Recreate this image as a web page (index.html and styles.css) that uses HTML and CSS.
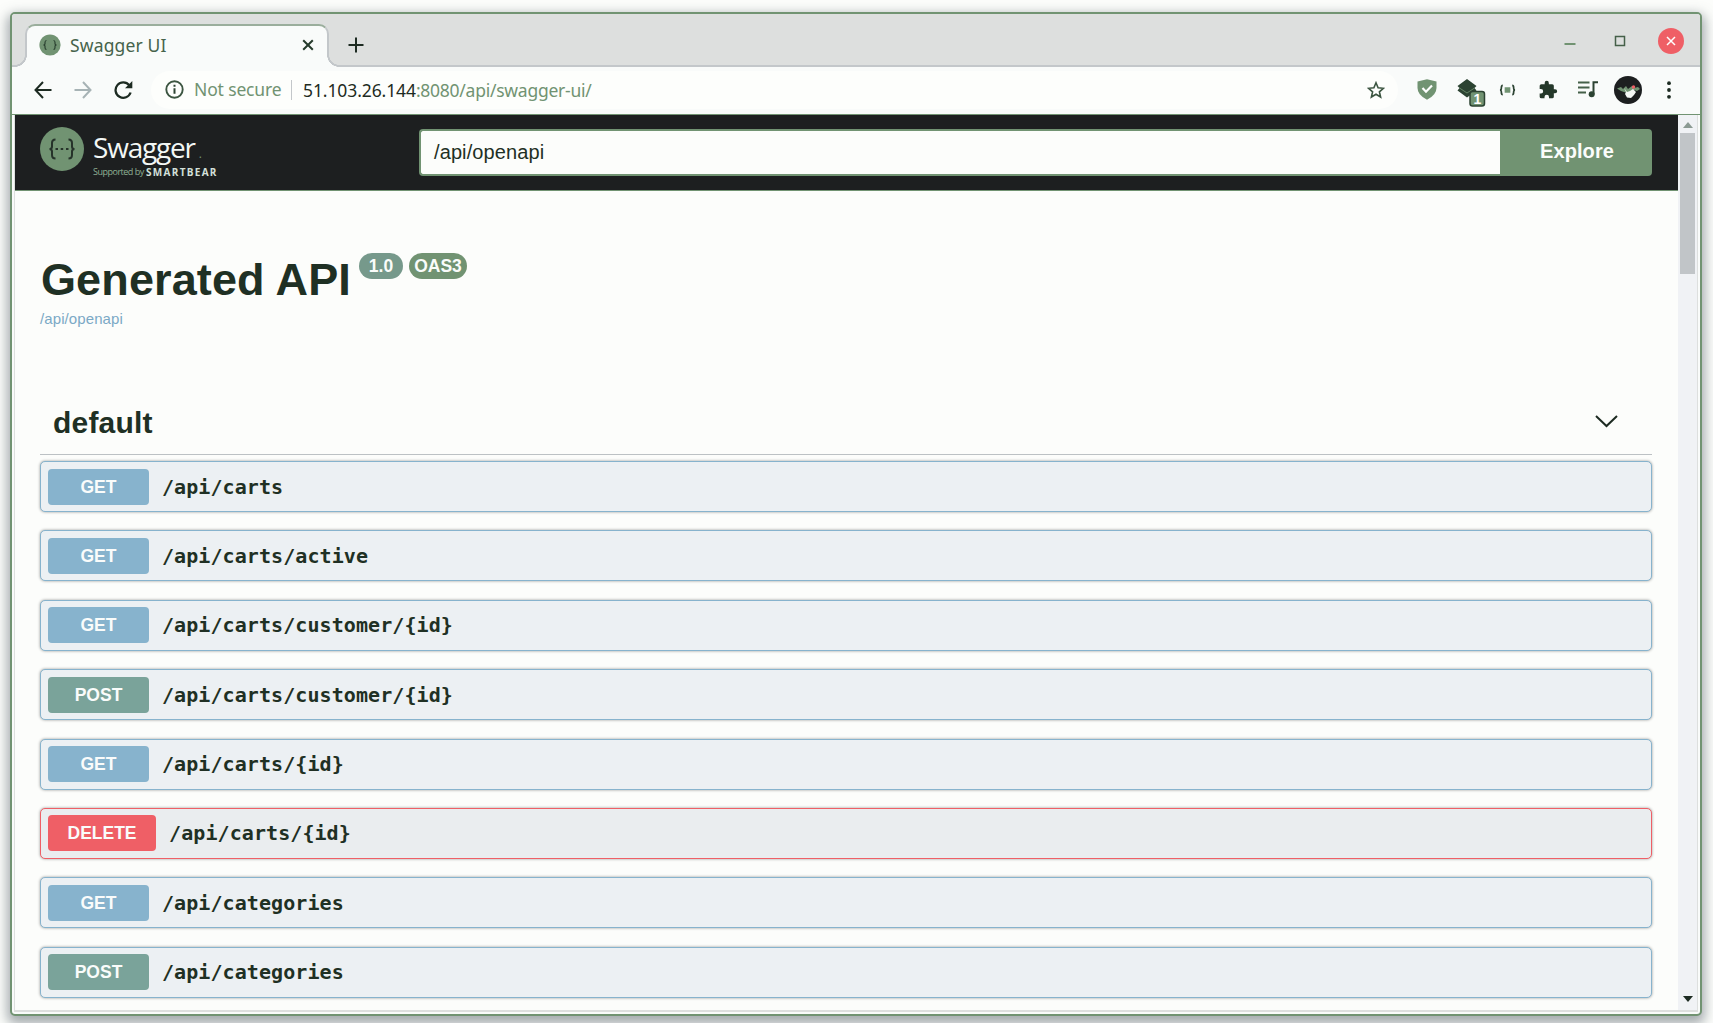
FILE: index.html
```html
<!DOCTYPE html>
<html lang="en">
<head>
<meta charset="utf-8">
<title>Swagger UI</title>
<link rel="stylesheet" href="styles.css">
</head>
<body>
<div class="window">
  <div class="tabstrip">
    <div class="tab">
      <svg class="favicon" width="22" height="22" viewBox="0 0 22 22"><circle cx="11" cy="11" r="10.6" fill="#719372"/><path d="M7.5 6.5q-1.500 0-1.500 2v1.500l-1 1 1 1v1.500q0 2 1.500 2M14.500 6.500q1.500 0 1.500 2v1.500l1 1-1 1v1.500q0 2-1.500 2" fill="none" stroke="#2c4332" stroke-width="1.200"/></svg>
      <span class="tab-title">Swagger UI</span>
      <svg class="tab-close" width="12" height="12" viewBox="0 0 12 12"><path d="M1.200 1.200l9.600 9.600M10.800 1.200l-9.600 9.600" stroke="#263b2c" stroke-width="2"/></svg>
    </div>
    <svg class="new-tab" width="16" height="16" viewBox="0 0 16 16"><path d="M8 .5v15M.5 8h15" stroke="#1d2b22" stroke-width="2"/></svg>
    <div class="controls">
      <svg width="12" height="12" viewBox="0 0 12 12"><path d="M.5 9h11" stroke="#719372" stroke-width="2"/></svg>
      <svg width="12" height="12" viewBox="0 0 12 12"><rect x="1.500" y="1.500" width="9" height="9" fill="none" stroke="#456049" stroke-width="1.500"/></svg>
      <svg width="26" height="26" viewBox="0 0 26 26"><circle cx="13" cy="13" r="13" fill="#ef5f66"/><path d="M9 9l8 8M17 9l-8 8" stroke="#fff" stroke-width="1.500"/></svg>
    </div>
  </div>

  <div class="toolbar">
    <div class="nav">
      <svg width="18" height="18" viewBox="0 0 18 18"><path d="M9 1L1.500 9L9 17M1.500 9H17.500" fill="none" stroke="#1d2b22" stroke-width="2"/></svg>
      <svg width="18" height="18" viewBox="0 0 18 18"><path d="M9 1l7.500 8L9 17M16.500 9H.5" fill="none" stroke="#a7b3b5" stroke-width="2"/></svg>
      <svg width="19" height="18" viewBox="0 0 19 18"><path d="M15.300 4.300A7.700 7.700 0 1 0 16.600 11.500" fill="none" stroke="#1d2b22" stroke-width="2.300"/><path d="M18.300 0v7.300H11z" fill="#1d2b22"/></svg>
    </div>
    <div class="address">
      <svg class="info" width="19" height="19" viewBox="0 0 19 19"><circle cx="9.500" cy="9.500" r="8.200" fill="none" stroke="#3c5541" stroke-width="1.900"/><path d="M9.500 8.200v5.600M9.500 4.800v2" stroke="#2c4332" stroke-width="2"/></svg>
      <span class="insecure">Not secure</span>
      <span class="url"><b>51.103.26.144</b>:8080/api/swagger-ui/</span>
      <svg class="star" width="18" height="18" viewBox="0 0 18 18"><path d="M9 1.800l2.100 5 5.300.5-4 3.500 1.200 5.200L9 13.200 4.400 16l1.200-5.200-4-3.500 5.300-.5z" fill="none" stroke="#3c5541" stroke-width="1.600"/></svg>
    </div>
    <div class="extensions">
      <svg class="shield" width="20" height="21" viewBox="0 0 20 21"><path d="M10 .3l9.500 2.200v6.500q0 7-9.500 11.700Q.5 16 .5 9V2.500z" fill="#719372"/><path d="M5.500 9l3.500 3.700 6-6.200" fill="none" stroke="#fff" stroke-width="2.200"/></svg>
      <svg class="layers" width="29" height="29" viewBox="0 0 29 29"><path d="M10 1l9.500 7-2 2 2 2.500L10 19.500.5 12.500l2-2.500-2-2z" fill="#2c4332"/><path d="M2.500 10l7.500 5 7.500-5" fill="none" stroke="#719372" stroke-width=".8"/><rect x="13" y="13.500" width="14.500" height="14.500" rx="2.500" fill="#719372" stroke="#2c4332" stroke-width="1.500"/><text x="20.300" y="26" text-anchor="middle" class="badge-count">1</text></svg>
      <svg class="braces" width="17" height="12" viewBox="0 0 18 12"><path d="M4 1Q2.500 1 2.500 3.500T1 6q1.500 0 1.500 2.500T4 11M14 1q1.500 0 1.500 2.500T17 6q-1.500 0-1.500 2.500T14 11" fill="none" stroke="#2c4332" stroke-width="1.800"/><path d="M6 3h6v6H6z" fill="#719372"/></svg>
      <svg class="puzzle" width="20" height="20" viewBox="0 0 24 24"><path d="M20.500 11H19V7a2 2 0 0 0-2-2h-4V3.500a2.500 2.500 0 0 0-5 0V5H4a2 2 0 0 0-2 2v3.800h1.500a2.700 2.700 0 0 1 0 5.400H2V20a2 2 0 0 0 2 2h3.800v-1.500a2.700 2.700 0 0 1 5.400 0V22H17a2 2 0 0 0 2-2v-4h1.500a2.500 2.500 0 0 0 0-5z" fill="#25382a"/></svg>
      <svg class="queue" width="20" height="17" viewBox="0 0 20 17"><path d="M0 1.500h11.500M0 6.500h11.500M0 11.500h8" stroke="#456049" stroke-width="2"/><path d="M15.500 13V1.200H20" fill="none" stroke="#2c4332" stroke-width="2"/><circle cx="13.700" cy="13.300" r="3" fill="#2c4332"/></svg>
      <svg class="avatar" width="28" height="28" viewBox="0 0 28 28"><circle cx="14" cy="14" r="14" fill="#1d1f20"/><path d="M3 12.500l4-1.500 2 2 3-3 2 3 4-3 2 2 4-1 2 2-3 2-3-1-3 2-4 1-6-2z" fill="#719372"/><path d="M10 12l3 4 3-1 3-2 3 3-2 3-3 3-4-.5-2-3.500 1-2z" fill="#f5f7f5"/><circle cx="19.500" cy="11" r="1.700" fill="#ef5f66"/></svg>
      <svg width="4" height="18" viewBox="0 0 4 18" fill="#1d2b22"><circle cx="2" cy="2.200" r="1.900"/><circle cx="2" cy="9" r="1.900"/><circle cx="2" cy="15.800" r="1.900"/></svg>
    </div>
  </div>

  <div class="viewport">
    <div class="page">
      <header class="topbar">
        <div class="logo">
          <svg width="44" height="44" viewBox="0 0 44 44"><circle cx="22" cy="22" r="22" fill="#719372"/><path d="M15.500 12.500q-3.500 0-3.500 3.500v3.500q0 2.500-2.500 2.500 2.500 0 2.500 2.500V28q0 3.500 3.500 3.500M28.500 12.500q3.500 0 3.500 3.500v3.500q0 2.500 2.500 2.500-2.500 0-2.500 2.500V28q0 3.500-3.500 3.500" fill="none" stroke="#26332a" stroke-width="2"/><path d="M15.500 22h2.500M20.700 22h2.500M26 22h2.500" stroke="#26332a" stroke-width="2.200"/></svg>
          <div class="wordmark">
            <div class="brand">Swagger<span class="dot">.</span></div>
            <div class="support"><span>Supported by</span><b>SMARTBEAR</b></div>
          </div>
        </div>
        <div class="search"><div class="field">/api/openapi</div><div class="explore">Explore</div></div>
      </header>
      <main class="content">
        <div class="title"><h1>Generated API</h1><span class="pill version">1.0</span><span class="pill oas">OAS3</span></div>
        <div class="spec-link">/api/openapi</div>
        <div class="section"><h2>default</h2>
          <svg width="23" height="13" viewBox="0 0 23 13"><path d="M1 1l10.500 10L22 1" fill="none" stroke="#1d2b22" stroke-width="2"/></svg>
        </div>
        <div class="operations">
          <div class="op"><span class="method get">GET</span><span class="path">/api/carts</span></div>
          <div class="op"><span class="method get">GET</span><span class="path">/api/carts/active</span></div>
          <div class="op"><span class="method get">GET</span><span class="path">/api/carts/customer/{id}</span></div>
          <div class="op"><span class="method post">POST</span><span class="path">/api/carts/customer/{id}</span></div>
          <div class="op"><span class="method get">GET</span><span class="path">/api/carts/{id}</span></div>
          <div class="op danger"><span class="method delete">DELETE</span><span class="path">/api/carts/{id}</span></div>
          <div class="op"><span class="method get">GET</span><span class="path">/api/categories</span></div>
          <div class="op"><span class="method post">POST</span><span class="path">/api/categories</span></div>
        </div>
      </main>
    </div>
    <div class="scrollbar">
      <svg width="10" height="6" viewBox="0 0 10 6"><path d="M0 6l5-6 5 6z" fill="#8b9a93"/></svg>
      <div class="thumb"></div>
      <svg class="down" width="10" height="6" viewBox="0 0 10 6"><path d="M0 0h10L5 6z" fill="#1d2b22"/></svg>
    </div>
  </div>
</div>
</body>
</html>
```
FILE: styles.css
```css
* { box-sizing: border-box; }
svg { display: block; flex: none; }
body {
  margin: 0;
  width: 1713px;
  height: 1023px;
  padding: 12px 11px 7px 10px;
  overflow: hidden;
  background: #fcfdfb;
  font-family: "Liberation Sans", Arial, sans-serif;
  color: #1f3024;
}
.window {
  height: 1004px;
  border: 2px solid #719372;
  border-radius: 5px;
  background: #f9fbfa;
  display: flex;
  flex-direction: column;
  overflow: hidden;
  box-shadow: 0 5px 12px 3px rgba(80, 92, 100, .5);
}
.tabstrip {
  height: 53px;
  flex: none;
  display: flex;
  align-items: center;
  background: #dddfde;
  border-bottom: 2px solid #c3c7ca;
  padding: 0 16px 0 13px;
}
.tab {
  position: relative;
  width: 304px;
  height: 43px;
  margin: 10px 0 -2px;
  padding: 0 13px 3px;
  display: flex;
  align-items: center;
  background: #f9fbfa;
  border: 2px solid #c3c7ca;
  border-top-color: #9aae9c;
  border-bottom: 0;
  border-radius: 10px 10px 0 0;
}
.tab::before, .tab::after {
  content: "";
  position: absolute;
  bottom: 0;
  width: 12px;
  height: 12px;
}
.tab::before { left: -12px; background: radial-gradient(circle at 0 0, #dddfde 9.600px, #c3c7ca 10px 11.600px, #f9fbfa 12px); }
.tab::after { right: -12px; background: radial-gradient(circle at 100% 0, #dddfde 9.600px, #c3c7ca 10px 11.600px, #f9fbfa 12px); }
.favicon { margin-left: -1px; }
.tab-title { margin-left: 9px; font: 17.500px "Noto Sans", sans-serif; letter-spacing: .15px; color: #46634b; flex: 1; }
.tab-close { margin-right: 0; }
.new-tab { margin-left: 19px; margin-top: 10px; }
.controls { margin-left: auto; display: flex; align-items: center; margin-top: 3px; }
.controls svg + svg { margin-left: 38px; }
.controls svg:last-child { margin-left: 32px; }
.toolbar {
  height: 48px;
  flex: none;
  display: flex;
  align-items: center;
  border-bottom: 1px solid #719372;
  padding: 0 29px 2px 22px;
}
.nav { display: flex; gap: 22px; width: 117px; }
.address {
  flex: 1;
  height: 38px;
  border-radius: 19px;
  background: #fdfefc;
  display: flex;
  align-items: center;
  padding: 0 13px 0 14px;
  font: 17.500px "Noto Sans", sans-serif;
}
.insecure { width: 98px; margin-left: 10px; height: 20px; line-height: 19px; letter-spacing: -.15px; border-right: 1px solid #c3c7ca; color: #719372; white-space: nowrap; }
.url { margin-left: 11px; letter-spacing: -.25px; color: #719372; white-space: nowrap; flex: 1; }
.url b { font-weight: 400; letter-spacing: -.1px; color: #1d2b22; }
.extensions { width: 254px; margin-left: 19px; display: flex; align-items: center; }
.shield { margin-right: 20px; }
.layers { margin-right: 13px; margin-top: 5px; }
.braces { margin-right: 22px; }
.puzzle { margin-right: 20px; }
.queue { margin-right: 16px; }
.avatar { margin-right: 25px; }
.badge-count { font: bold 14px "Liberation Sans", sans-serif; fill: #fff; }
.viewport {
  flex: 1;
  min-height: 0;
  display: flex;
  margin: 0 2px 2px;
  border: solid #dddfde;
  border-width: 0 1px 2px;
}
.page { width: 1663px; background: #fcfdfb; }
.topbar {
  height: 76px;
  background: #1d1f20;
  border-bottom: 1px solid #719372;
  display: flex;
  align-items: flex-start;
  padding: 12px 26px 0 25px;
}
.logo { width: 379px; display: flex; }
.wordmark { margin-left: 9px; color: #f3f7f5; }
.brand { font: 28px/32px "Open Sans", sans-serif; letter-spacing: -1.200px; margin-top: 4px; }
.dot { color: #719372; font-size: 12px; margin-left: 4px; }
.support { display: flex; margin-top: -5px; font: 9px/14px "Open Sans", sans-serif; color: #8fb094; }
.support span { width: 53px; letter-spacing: -.5px; }
.support b { font-size: 10px; letter-spacing: 1.300px; color: #d4e0da; }
.search { flex: 1; height: 47px; margin-top: 2px; display: flex; }
.field {
  flex: 1;
  border: 2px solid #719372;
  border-right: 0;
  border-radius: 4px 0 0 4px;
  background: #fcfdfb;
  padding-left: 13px;
  font-size: 20px;
  letter-spacing: .1px;
  line-height: 42px;
}
.explore {
  width: 152px;
  background: #719372;
  border-radius: 0 4px 4px 0;
  color: #fbfdfb;
  font: bold 20px/45px "Liberation Sans", sans-serif;
  letter-spacing: .1px;
  padding-left: 2px;
  text-align: center;
}
.content { padding: 62px 26px 0 25px; }
.title { display: flex; padding-left: 1px; }
h1 { margin: 0; font-size: 45px; line-height: 53px; height: 54px; letter-spacing: .12px; }
.pill {
  height: 26px;
  border-radius: 13px;
  color: #fafcfa;
  font-weight: bold;
  font-size: 17.500px;
  line-height: 26px;
  text-align: center;
}
.version { width: 44px; margin-left: 8px; background: #76998b; }
.oas { width: 58px; margin-left: 6px; background: #719372; }
.spec-link { font-size: 15px; line-height: 18px; margin-top: 3px; letter-spacing: .1px; color: #7ba9c6; }
.section {
  height: 63px;
  margin-top: 64px;
  padding: 0 34px 0 13px;
  border-bottom: 1px solid #bcc1c4;
  display: flex;
  align-items: center;
  justify-content: space-between;
}
.section svg { margin-top: -3px; }
h2 { margin: 0; font-size: 30px; line-height: 34px; letter-spacing: .2px; }
.operations { display: grid; gap: 18.400px; margin-top: 6px; }
.op {
  height: 51px;
  border: 1.500px solid #87b3cd;
  border-radius: 5px;
  background: #ecf0f3;
  box-shadow: 0 0 3px rgba(0, 0, 0, .4);
  display: flex;
  align-items: center;
  padding-left: 7px;
}
.op.danger { border-color: #ef5f66; background: #eaedef; }
.method {
  min-width: 101px;
  height: 36px;
  padding: 0 19px;
  border-radius: 4px;
  color: #fafcfb;
  font: bold 17.500px/36px "Liberation Sans", sans-serif;
  text-align: center;
}
.get { background: #87b3cd; }
.post { background: #7aa39a; }
.delete { background: #ef5f66; padding: 0 19.500px; }
.path { margin-left: 13px; font: bold 20px "DejaVu Sans Mono", monospace; letter-spacing: .08px; }
.scrollbar { flex: 1; background: #f0f2f5; display: flex; flex-direction: column; align-items: center; padding: 7px 0 8px; }
.thumb { width: 15px; height: 141px; margin-top: 5px; background: #c1c5c8; }
.down { margin-top: auto; }
```
